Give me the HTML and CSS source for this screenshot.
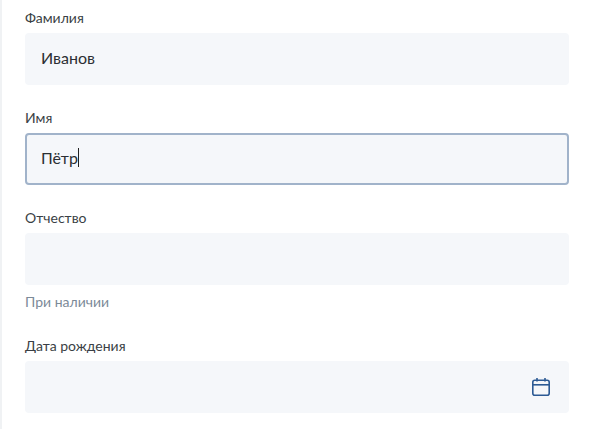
FILE: index.html
```html
<!DOCTYPE html>
<html lang="ru">
<head>
    <meta charset="UTF-8">
    <meta name="viewport" content="width=device-width, initial-scale=1.0">
    <title>Личные данные</title>
    <link rel="stylesheet" href="styles.css">
</head>
<body>

<div class="form">
    <div class="group">
        <div class="label">Фамилия</div>
        <div class="field">Иванов</div>
    </div>

    <div class="group">
        <div class="label">Имя</div>
        <div class="field focused">Пётр<span class="caret"></span></div>
    </div>

    <div class="group">
        <div class="label">Отчество</div>
        <div class="field"></div>
        <div class="hint">При наличии</div>
    </div>

    <div class="group">
        <div class="label">Дата рождения</div>
        <div class="field">
            <svg class="calendar" width="20" height="20" viewBox="0 0 20 20" fill="none" stroke="#2c5a94" stroke-width="1.6">
                <rect x="1.8" y="3.3" width="16.4" height="15" rx="2"/>
                <path d="M2 7.8H18"/>
                <path d="M6 1V4.5"/>
                <path d="M14 1V4.5"/>
            </svg>
        </div>
    </div>
</div>

</body>
</html>
```

FILE: styles.css
```css
html, body {
    height: 100%;
}
body {
    margin: 0;
    background-color: white;
    font-family: Lato, "Noto Sans", sans-serif;
    color: #3a3f45;
    overflow: hidden;
}
.form {
    box-sizing: border-box;
    height: 100%;
    border-left: 2px solid #f0f2f4;
    padding: 9px 22px 0 23px;
    display: flex;
    flex-direction: column;
    gap: 24px;
}
.label {
    height: 24px;
    line-height: 18px;
    font-size: 14px;
}
.field {
    box-sizing: border-box;
    height: 52px;
    padding: 0 16px 3px;
    display: flex;
    align-items: center;
    justify-content: space-between;
    background-color: #f5f7fa;
    border-radius: 4px;
    font-size: 16px;
    color: #2b2f33;
}
.focused {
    justify-content: flex-start;
    padding: 0 14px 3px;
    border: 2px solid #a1b3ca;
}
.caret {
    width: 1px;
    height: 19px;
    background-color: #222;
}
.hint {
    margin-top: 8px;
    margin-bottom: 2px;
    line-height: 18px;
    font-size: 14px;
    color: #7c8a98;
}
.calendar {
    margin: 3px 2px 0 auto;
}
```
